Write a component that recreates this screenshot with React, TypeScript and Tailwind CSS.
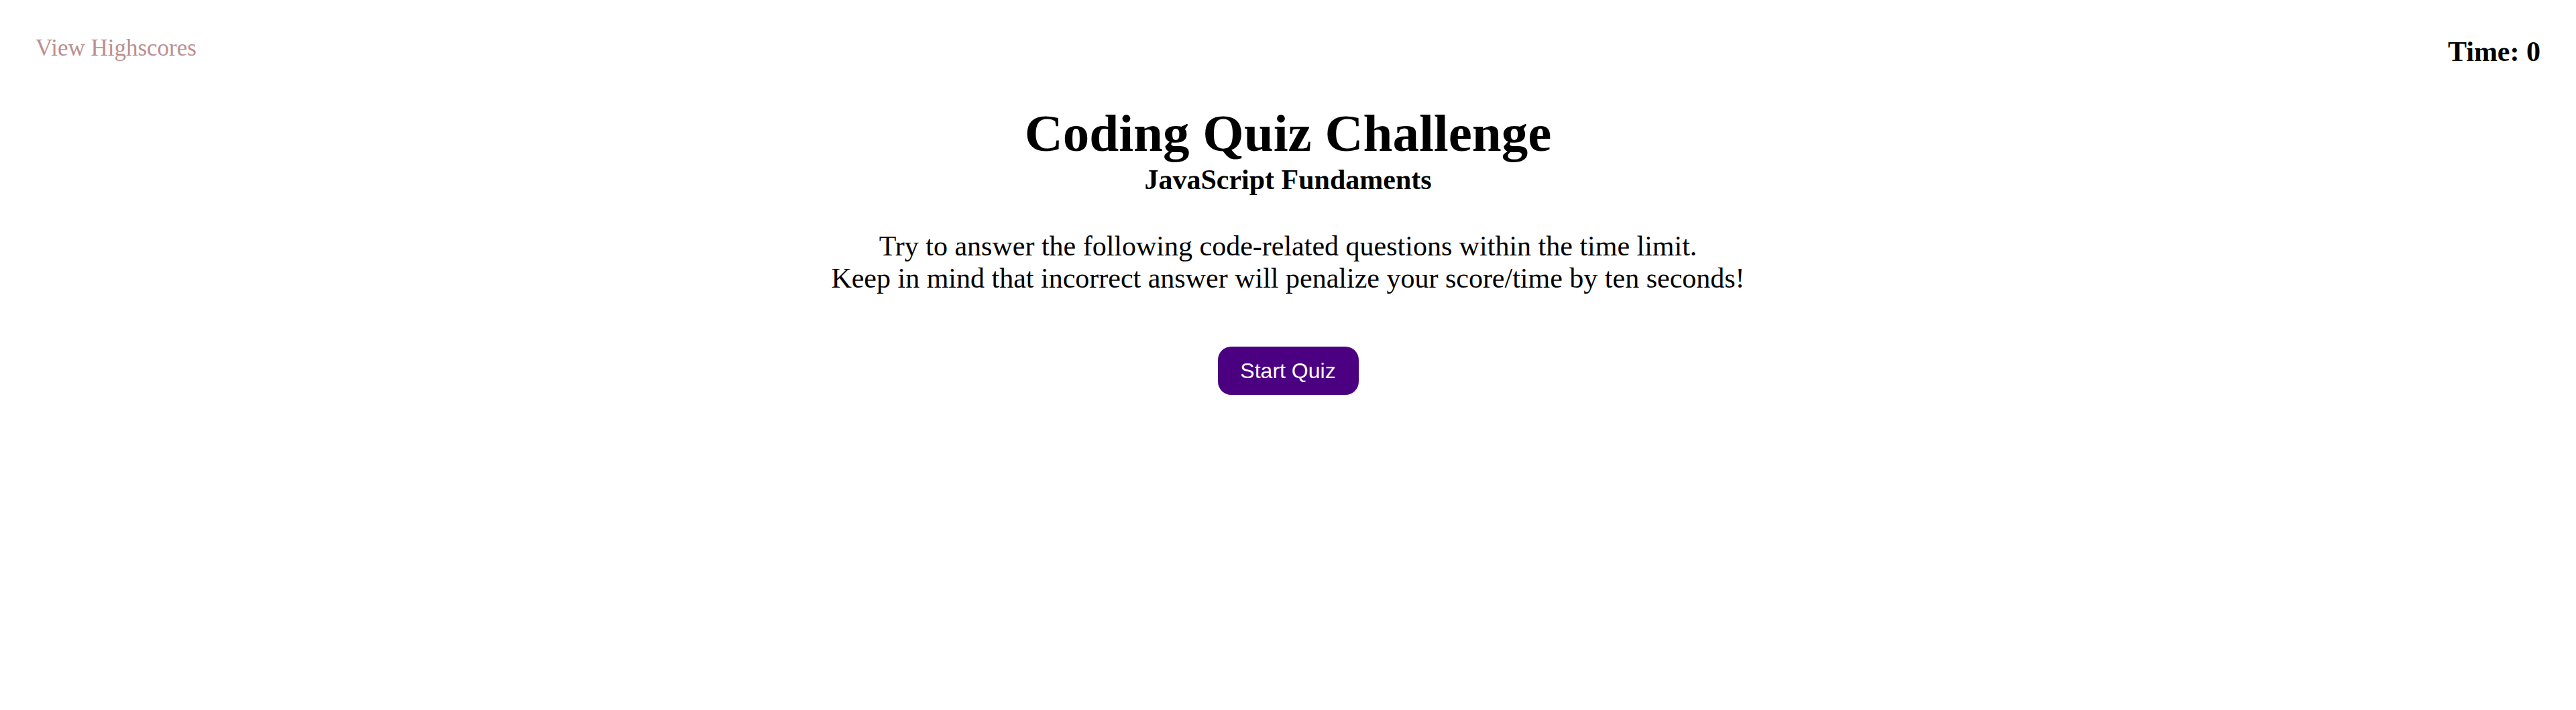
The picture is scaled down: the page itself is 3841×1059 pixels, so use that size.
const App = () => {
  return (
    <div className="min-h-screen bg-white font-['Liberation_Serif','Times_New_Roman',serif] text-black">
      {/* top bar */}
      <header className="flex items-start justify-between px-[53px] pt-[54px]">
        <a href="#" className="text-[35px] leading-none text-[#bc8f8f]">
          View Highscores
        </a>
        <div className="mt-[2px] text-[42px] font-bold leading-none">Time: 0</div>
      </header>

      <main className="flex flex-col items-center text-center">
        <h1 className="mt-[61px] text-[79px] font-bold leading-none">Coding Quiz Challenge</h1>
        <h3 className="mt-[9px] text-[42px] font-bold leading-none">JavaScript Fundaments</h3>
        <p className="mt-[55px] text-[42px] leading-[47.6px]">
          Try to answer the following code-related questions within the time limit.
          <br />
          Keep in mind that incorrect answer will penalize your score/time by ten seconds!
        </p>
        <button className="mt-[78px] h-[72px] w-[210px] rounded-[20px] bg-[#4b0082] font-['Liberation_Sans',Arial,sans-serif] text-[32px] text-white">
          Start Quiz
        </button>
      </main>
    </div>
  );
};

export default App;
